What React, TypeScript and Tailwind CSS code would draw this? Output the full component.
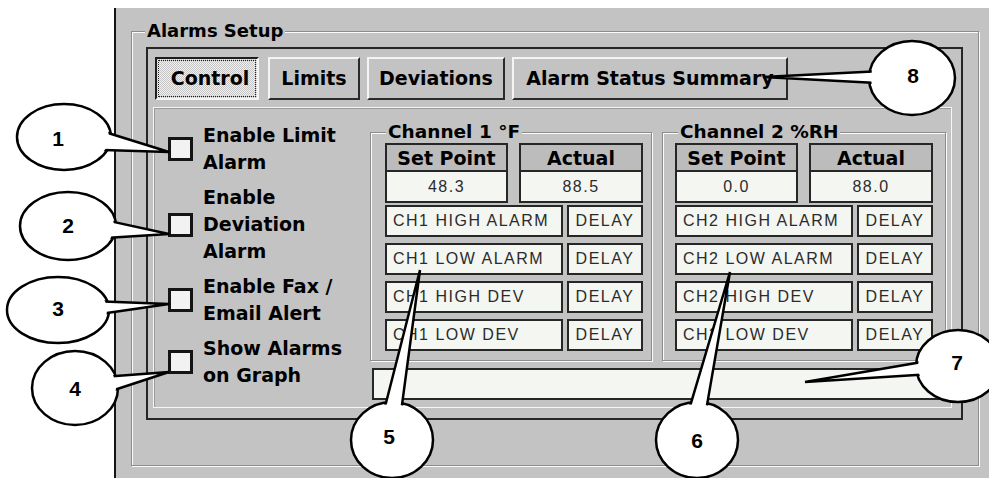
import React from 'react';

const boldFont = "font-['DejaVu_Sans',sans-serif] font-bold text-black";
const thinFont = "font-['Liberation_Sans',Arial,sans-serif] text-[16px] tracking-[1.5px] text-[#2b2b2b]";
const cellBox = 'border-2 border-[#262626] bg-[#f4f6f2]';

type Callout = {
  n: string;
  cx: number;
  cy: number;
  rx: number;
  ry: number;
  tip: [number, number];
  a: [number, number];
  tx: number;
  ty: number;
};

const callouts: Callout[] = [
  { n: '1', cx: 64, cy: 137, rx: 47, ry: 33, tip: [169, 152], a: [-8, 25], tx: 58, ty: 138 },
  { n: '2', cx: 68, cy: 226, rx: 48, ry: 34, tip: [169, 234], a: [-8, 22], tx: 68, ty: 225 },
  { n: '3', cx: 58, cy: 310, rx: 51, ry: 33, tip: [169, 304], a: [-16, 6], tx: 58, ty: 308 },
  { n: '4', cx: 75, cy: 388, rx: 43, ry: 37, tip: [169, 372], a: [-20, 3], tx: 75, ty: 388 },
  { n: '5', cx: 392, cy: 440, rx: 41, ry: 38, tip: [420, 270], a: [-100, -75], tx: 389, ty: 436 },
  { n: '6', cx: 697, cy: 440, rx: 41, ry: 38, tip: [730, 272], a: [-100, -75], tx: 697, ty: 440 },
  { n: '7', cx: 958, cy: 366, rx: 42, ry: 36, tip: [805, 382], a: [165, 186], tx: 957, ty: 362 },
  { n: '8', cx: 912, cy: 78, rx: 43, ry: 37, tip: [763, 77], a: [172, 191], tx: 913, ty: 75 },
];

const onEllipse = (c: Callout, deg: number, k: number) => {
  const r = (deg * Math.PI) / 180;
  return `${c.cx + c.rx * k * Math.cos(r)},${c.cy + c.ry * k * Math.sin(r)}`;
};

const Callouts: React.FC = () => (
  <svg className="absolute inset-0 pointer-events-none" width={989} height={478} viewBox="0 0 989 478">
    {callouts.map((c) => (
      <g key={c.n}>
        <ellipse cx={c.cx} cy={c.cy} rx={c.rx} ry={c.ry} fill="#fff" stroke="#000" strokeWidth={2.5} />
        <path
          d={`M${onEllipse(c, c.a[0], 0.93)} L${c.tip[0]},${c.tip[1]} L${onEllipse(c, c.a[1], 0.93)}`}
          fill="#fff"
          stroke="#000"
          strokeWidth={2.5}
          strokeLinejoin="miter"
        />
        <ellipse cx={c.cx} cy={c.cy} rx={c.rx - 2} ry={c.ry - 2} fill="#fff" />
        <text
          x={c.tx}
          y={c.ty}
          textAnchor="middle"
          dominantBaseline="central"
          fontFamily="'Liberation Sans', Arial, sans-serif"
          fontWeight="bold"
          fontSize={21}
          fill="#000"
        >
          {c.n}
        </text>
      </g>
    ))}
  </svg>
);

const options = [
  ['Enable Limit', 'Alarm'],
  ['Enable', 'Deviation', 'Alarm'],
  ['Enable Fax /', 'Email Alert'],
  ['Show Alarms', 'on Graph'],
];

const Channel: React.FC<{ title: string; ch: string; setPoint: string; actual: string; width: string; pad: string }> = ({
  title,
  ch,
  setPoint,
  actual,
  width,
  pad,
}) => (
  <fieldset className={`${width} h-[240px] border border-[#8c8c8c] shadow-[inset_1px_1px_0_#fbfbfb,1px_1px_0_#fbfbfb]`}>
    <legend className={`ml-[15px] px-[2px] leading-[22px] text-[18.5px] bg-[#c3c3c3] ${boldFont}`}>{title}</legend>
    <div className={`${pad} flex flex-col`}>
      <div className="flex gap-[11px]">
        {[
          ['Set Point', setPoint, 'w-[123px]'],
          ['Actual', actual, 'w-[124px]'],
        ].map(([label, value, w]) => (
          <div key={label} className={`${w} border-2 border-[#262626]`}>
            <div className={`h-[27px] leading-[27px] text-center text-[19px] bg-[#bcbcbc] border-b-2 border-[#262626] ${boldFont}`}>
              {label}
            </div>
            <div className={`h-[29px] leading-[29px] text-center bg-[#f4f6f2] ${thinFont}`}>{value}</div>
          </div>
        ))}
      </div>
      <div className="mt-[2px] flex flex-col gap-[6px]">
        {['HIGH ALARM', 'LOW ALARM', 'HIGH DEV', 'LOW DEV'].map((row) => (
          <div key={row} className="flex gap-[4px] h-[32px]">
            <div className={`w-[178px] pl-[6px] leading-[28px] ${cellBox} ${thinFont}`}>
              {ch} {row}
            </div>
            <div className={`w-[76px] text-center leading-[28px] ${cellBox} ${thinFont}`}>DELAY</div>
          </div>
        ))}
      </div>
    </div>
  </fieldset>
);

const tabBase = `h-[43px] border-2 flex items-center justify-center text-[19px] ${boldFont}`;
const raised = 'border-t-[#f4f4f4] border-l-[#f4f4f4] border-b-[#2a2a2a] border-r-[#2a2a2a] bg-[#c3c3c3]';

export default function App() {
  return (
    <div className="relative w-[989px] h-[478px] bg-white overflow-hidden">
      <div className="ml-[114px] mt-[8px] h-[470px] bg-[#c3c3c3] border-l-2 border-[#141414] pt-[12px] pl-[15px]">
        <fieldset className="w-[848px] h-[446px] border border-[#8c8c8c] shadow-[inset_1px_1px_0_#fbfbfb,1px_1px_0_#fbfbfb]">
          <legend className={`ml-[13px] px-[2px] leading-[22px] text-[18px] bg-[#c3c3c3] ${boldFont}`}>Alarms Setup</legend>
          <div className="ml-[14px] mt-[5px] w-[817px] h-[373px] border-2 border-[#262626] flex flex-col">
            <div className="pl-[7px] pt-[8px] flex gap-[7px]">
              <div
                className={`${tabBase} w-[104px] mr-[2px] p-[1px] border-t-[#1e1e1e] border-l-[#1e1e1e] border-b-[#f4f4f4] border-r-[#f4f4f4] bg-[repeating-conic-gradient(#f2f2f2_0_25%,#c3c3c3_0_50%)] bg-[length:2px_2px]`}
              >
                <div className="w-full h-full border border-dotted border-[#222] flex items-center justify-center pl-[6px]">
                  Control
                </div>
              </div>
              <div className={`${tabBase} ${raised} w-[92px]`}>Limits</div>
              <div className={`${tabBase} ${raised} w-[138px]`}>Deviations</div>
              <div className={`${tabBase} ${raised} w-[276px]`}>Alarm Status Summary</div>
            </div>
            <div className="ml-[5px] mt-[7px] w-[799px] h-[301px] border border-[#f6f6f6] shadow-[inset_1px_1px_0_#9a9a9a] flex">
              <div className="w-[216px] pl-[14px] pt-[14px] flex flex-col gap-[8px]">
                {options.map((lines) => (
                  <div key={lines.join(' ')} className="flex items-center gap-[10px]">
                    <div className="w-[25px] h-[24px] border-[3px] border-[#141414] bg-[#f2f2f2]" />
                    <div className={`leading-[27px] text-[19px] ${boldFont}`}>
                      {lines.map((l) => (
                        <div key={l}>{l}</div>
                      ))}
                    </div>
                  </div>
                ))}
              </div>
              <div className="pt-[13px] flex flex-col">
                <div className="flex gap-[10px]">
                  <Channel title="Channel 1 °F" ch="CH1" setPoint="48.3" actual="88.5" width="w-[282px]" pad="pl-[14px]" />
                  <Channel title="Channel 2 %RH" ch="CH2" setPoint="0.0" actual="88.0" width="w-[284px]" pad="pl-[12px]" />
                </div>
                <div className={`mt-[7px] ml-[2px] w-[574px] h-[32px] ${cellBox}`} />
              </div>
            </div>
          </div>
        </fieldset>
      </div>
      <Callouts />
    </div>
  );
}
